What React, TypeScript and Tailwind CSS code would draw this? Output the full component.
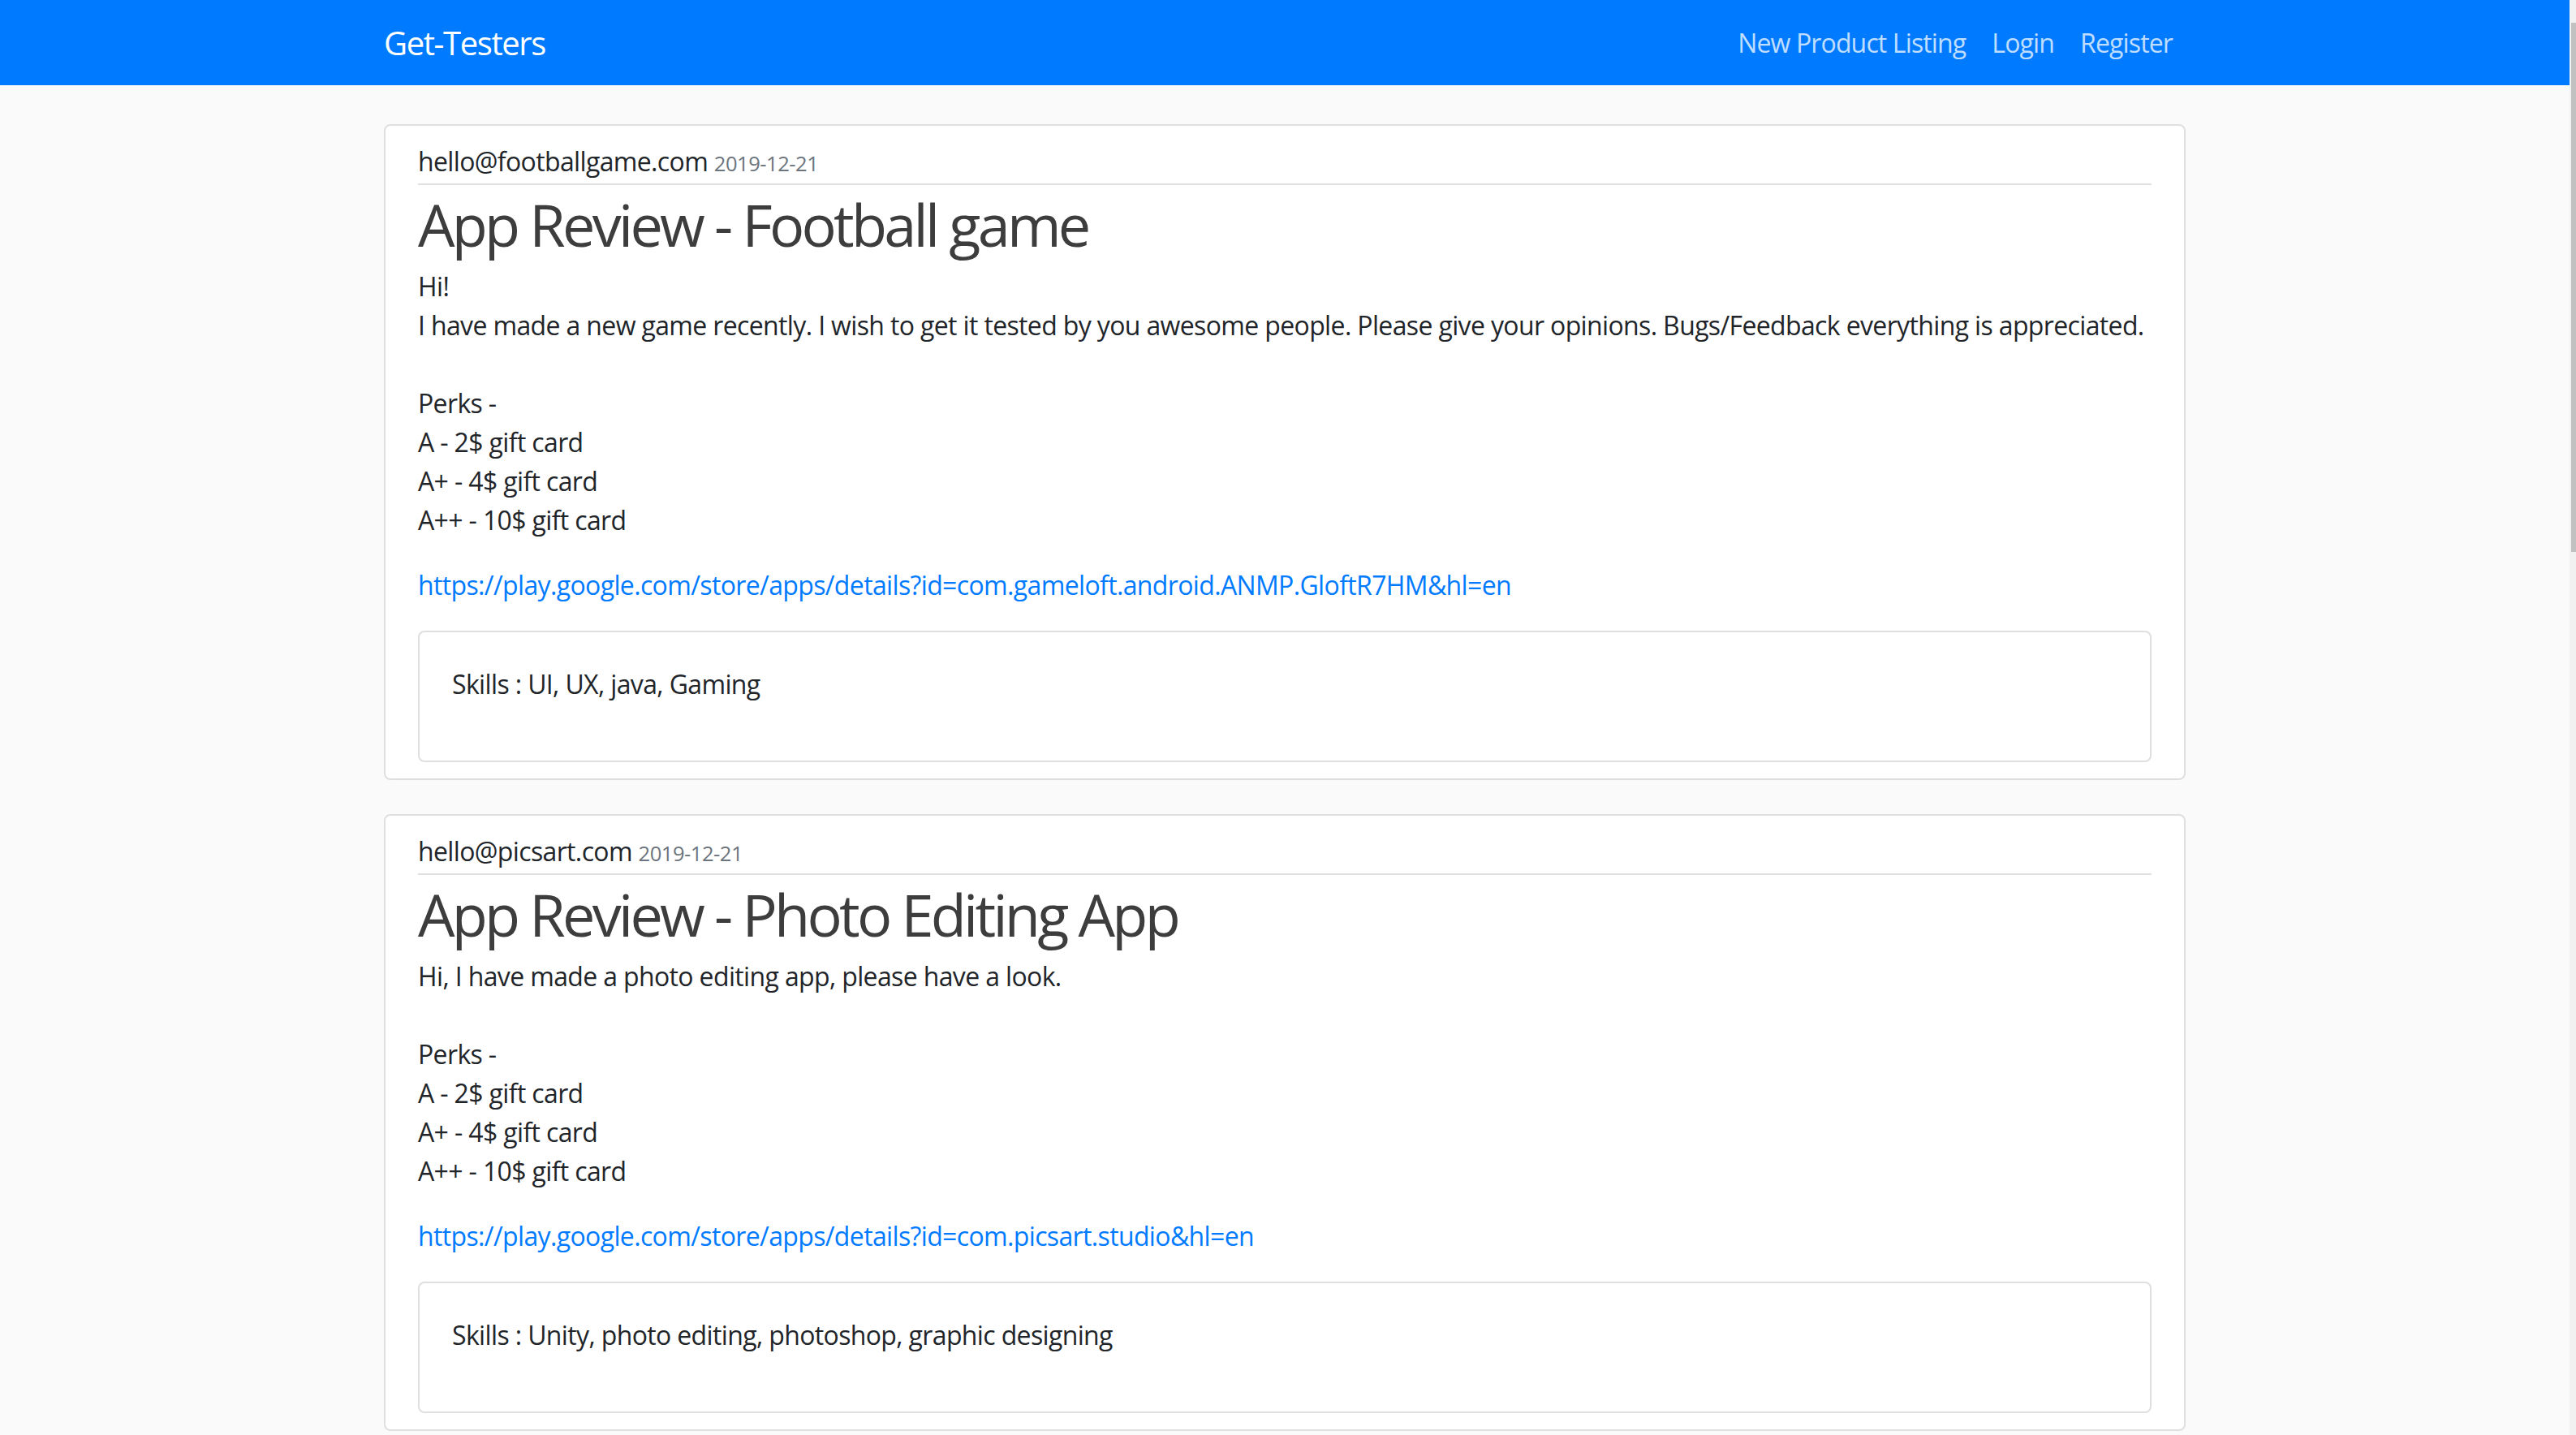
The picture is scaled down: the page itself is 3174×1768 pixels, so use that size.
import React from "react";

type Listing = {
  email: string;
  date: string;
  title: string;
  body: string;
  link: string;
  skills: string;
};

const listings: Listing[] = [
  {
    email: "hello@footballgame.com",
    date: "2019-12-21",
    title: "App Review - Football game",
    body:
      "Hi!\nI have made a new game recently. I wish to get it tested by you awesome people. Please give your opinions. Bugs/Feedback everything is appreciated.\n\u00a0\nPerks -\nA - 2$ gift card\nA+ - 4$ gift card\nA++ - 10$ gift card",
    link: "https://play.google.com/store/apps/details?id=com.gameloft.android.ANMP.GloftR7HM&hl=en",
    skills: "UI, UX, java, Gaming",
  },
  {
    email: "hello@picsart.com",
    date: "2019-12-21",
    title: "App Review - Photo Editing App",
    body:
      "Hi, I have made a photo editing app, please have a look.\n\u00a0\nPerks -\nA - 2$ gift card\nA+ - 4$ gift card\nA++ - 10$ gift card",
    link: "https://play.google.com/store/apps/details?id=com.picsart.studio&hl=en",
    skills: "Unity, photo editing, photoshop, graphic designing",
  },
];

function ListingCard({ item }: { item: Listing }) {
  return (
    <div className="mb-[42px] rounded-[8px] border-2 border-[#dfdfdf] bg-white px-[40px] pt-[20px] pb-[20px]">
      {/* Poster + date */}
      <div className="text-[32px] leading-[48px] text-[#212529]">
        {item.email} <span className="text-[25.6px] tracking-[-0.02em] text-[#6c757d]">{item.date}</span>
      </div>
      <div className="border-t-2 border-[#e0e0e0]" />

      <h1 className="mt-[0px] mb-[5px] text-[72px] leading-[96px] font-normal tracking-[-0.052em] text-[#3d3d3d]">
        {item.title}
      </h1>

      <p className="mb-[32px] whitespace-pre-line text-[32px] leading-[48px] text-[#212529]">{item.body}</p>

      <a href="#" className="mb-[32px] block text-[32px] leading-[48px] text-[#007bff]">
        {item.link}
      </a>

      {/* Skills */}
      <div className="rounded-[8px] border-2 border-[#dfdfdf] px-[40px] pt-[40px] pb-[38px]">
        <p className="mb-[32px] text-[32px] leading-[48px] text-[#212529]">Skills : {item.skills}</p>
      </div>
    </div>
  );
}

export default function App() {
  const navItems = ["New Product Listing", "Login", "Register"];

  return (
    <div className="flex h-screen overflow-hidden bg-[#fafafa] font-['Segoe_UI','Open_Sans',sans-serif] tracking-[-0.04em]">
      <div className="min-w-0 flex-1">
        {/* Navbar */}
        <nav className="h-[105px] bg-[#007bff]">
          <div className="mx-auto flex h-full w-[2280px] items-center justify-between px-[30px]">
            <a href="#" className="text-[40px] tracking-[-0.035em] text-white">
              Get-Testers
            </a>
            <div className="flex items-center">
              {navItems.map((name) => (
                <a key={name} href="#" className="px-[16px] text-[32px] leading-[48px] tracking-[-0.027em] text-white/75">
                  {name}
                </a>
              ))}
            </div>
          </div>
        </nav>

        <main className="mx-auto w-[2280px] px-[30px] pt-[48px]">
          {listings.map((item) => (
            <ListingCard key={item.title} item={item} />
          ))}
        </main>
      </div>

      {/* Scrollbar */}
      <div className="w-[8px] shrink-0 bg-[#f1f1f1] pt-[28px]">
        <div className="ml-[2px] h-[652px] bg-[#c1c1c1]" />
      </div>
    </div>
  );
}
